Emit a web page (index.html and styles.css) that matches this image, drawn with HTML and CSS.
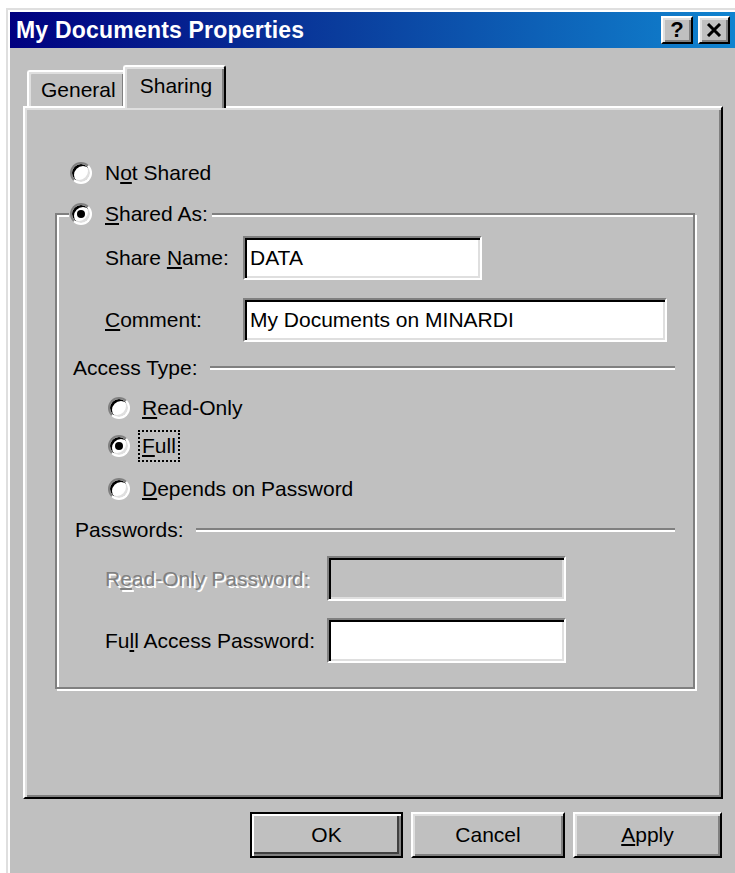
FILE: index.html
```html
<!DOCTYPE html>
<html lang="en">
<head>
<meta charset="utf-8">
<title>My Documents Properties</title>
<link rel="stylesheet" href="styles.css">
</head>
<body>
<div class="window">
  <div class="titlebar">
    <span class="title">My Documents Properties</span>
    <div class="tb-buttons">
      <button class="tb-btn help">?</button>
      <button class="tb-btn close" aria-label="Close">
        <svg width="16" height="14" viewBox="0 0 16 14"><path d="M2 1 L14 13 M14 1 L2 13" stroke="#000" stroke-width="3" fill="none"/></svg>
      </button>
    </div>
  </div>

  <div class="dialog-body">
    <div class="tabs">
      <div class="tab">General</div>
      <div class="tab active">Sharing</div>
    </div>

    <div class="panel">
      <label class="option not-shared">
        <span class="radio"></span>
        <span>N<u>o</u>t Shared</span>
      </label>

      <fieldset class="group">
        <legend class="legend">
          <span class="radio checked"></span>
          <span><u>S</u>hared As:</span>
        </legend>

        <div class="field-row share-row">
          <span class="label w-short">Share <u>N</u>ame:</span>
          <div class="textbox share-name">DATA</div>
        </div>
        <div class="field-row comment-row">
          <span class="label w-short"><u>C</u>omment:</span>
          <div class="textbox comment">My Documents on MINARDI</div>
        </div>

        <div class="heading access-heading">
          <span class="heading-label">Access Type:</span>
          <span class="etch"></span>
        </div>

        <label class="option sub read-only">
          <span class="radio"></span>
          <span><u>R</u>ead-Only</span>
        </label>
        <label class="option sub full">
          <span class="radio checked"></span>
          <span class="focus"><u>F</u>ull</span>
        </label>
        <label class="option sub depends">
          <span class="radio"></span>
          <span><u>D</u>epends on Password</span>
        </label>

        <div class="heading pw-heading">
          <span class="heading-label">Passwords:</span>
          <span class="etch"></span>
        </div>

        <div class="field-row ro-row">
          <span class="label w-long disabled">R<u>e</u>ad-Only Password:</span>
          <div class="textbox pw disabled-box"></div>
        </div>
        <div class="field-row fa-row">
          <span class="label w-long">Fu<u>l</u>l Access Password:</span>
          <div class="textbox pw"></div>
        </div>
      </fieldset>
    </div>

    <div class="actions">
      <button class="btn default ok">OK</button>
      <button class="btn cancel">Cancel</button>
      <button class="btn apply"><u>A</u>pply</button>
    </div>
  </div>
</div>
</body>
</html>
```

FILE: styles.css
```css
* { box-sizing: border-box; }

html, body {
  margin: 0;
  background: #fff;
}

body {
  font-family: "Liberation Sans", Arial, sans-serif;
  font-size: 21px;
  color: #000;
  overflow: hidden;
}

u { text-decoration-thickness: 2px; text-underline-offset: 2px; }

/* window frame */
.window {
  margin: 8px 0 0 6px;
  height: 865px;
  background: #c0c0c0;
  border-top: 2px solid #dfdfdf;
  border-left: 2px solid #dfdfdf;
  box-shadow: inset 2px 2px #fff;
  padding: 2px 0 0 2px;
  overflow: hidden;
}

.titlebar {
  height: 36px;
  background: linear-gradient(90deg, #000080 0%, #0a3c9c 45%, #1084d0 100%);
  display: flex;
  align-items: center;
  justify-content: space-between;
  padding: 0 5px 0 6px;
}

.title {
  color: #fff;
  font-weight: bold;
  font-size: 23px;
  letter-spacing: 0.2px;
}

.tb-buttons { display: flex; gap: 5px; }

.tb-btn {
  width: 32px;
  height: 28px;
  background: #c0c0c0;
  border: 2px solid;
  border-color: #fff #000 #000 #fff;
  box-shadow: inset 2px 2px #dfdfdf, inset -2px -2px #808080;
  display: flex;
  align-items: center;
  justify-content: center;
  padding: 0;
  font-family: "Liberation Sans", Arial, sans-serif;
  font-weight: bold;
  font-size: 22px;
  color: #000;
  line-height: 1;
}

/* dialog contents */
.dialog-body { padding: 17px 0 0 13px; }

.tabs {
  display: flex;
  align-items: flex-end;
  padding-left: 4px;
  margin-bottom: -2px;
  position: relative;
  z-index: 1;
}

.tab {
  height: 36px;
  margin-bottom: 2px;
  padding: 2px 8px 0 12px;
  display: flex;
  align-items: center;
  background: #c0c0c0;
  border-top: 2px solid #fff;
  border-left: 2px solid #fff;
  border-right: 2px solid #000;
  border-radius: 3px 3px 0 0;
  box-shadow: inset 2px 2px #dfdfdf, inset -2px 0 #808080;
}

.tab.active {
  height: 43px;
  margin-bottom: 0;
  margin-left: -3px;
  padding: 0 12px 4px 15px;
}

.panel {
  width: 700px;
  height: 693px;
  border: 2px solid;
  border-color: #fff #000 #000 #fff;
  box-shadow: inset 2px 2px #dfdfdf, inset -2px -2px #808080;
  padding-top: 52px;
}

/* radio buttons */
.option {
  display: flex;
  align-items: center;
  height: 26px;
  gap: 13px;
}

.radio {
  flex: none;
  width: 22px;
  height: 22px;
  border-radius: 50%;
  background: #fff;
  border: 2px solid;
  border-color: #808080 #fff #fff #808080;
  box-shadow: inset 2px 2px #000, inset -2px -2px #dfdfdf;
  display: flex;
  align-items: center;
  justify-content: center;
}

.radio.checked::after {
  content: "";
  width: 8px;
  height: 8px;
  border-radius: 50%;
  background: #000;
}

.not-shared { margin-left: 45px; }

/* etched group box */
.group {
  margin: 15px 26px 0 30px;
  padding: 0 0 24px 0;
  border: 2px solid #808080;
  box-shadow: inset 2px 2px #fff, 2px 2px #fff;
  min-width: 0;
}

.legend {
  display: flex;
  align-items: center;
  gap: 13px;
  height: 26px;
  margin-left: 12px;
  padding: 0 4px 0 1px;
  background: #c0c0c0;
}

.field-row { display: flex; align-items: center; }
.label { flex: none; margin-left: 48px; }
.w-short { width: 138px; }
.w-long { width: 222px; }

.share-row { margin-top: 9px; }
.comment-row { margin-top: 18px; }

.textbox {
  height: 44px;
  background: #fff;
  border: 2px solid;
  border-color: #808080 #fff #fff #808080;
  box-shadow: inset 2px 2px #000, inset -2px -2px #dfdfdf;
  padding: 0 5px;
  display: flex;
  align-items: center;
  white-space: nowrap;
}

.share-name { width: 239px; }
.comment { width: 424px; }
.pw { width: 239px; height: 45px; }
.disabled-box { background: #c0c0c0; }

.disabled {
  color: #808080;
  text-shadow: 2px 2px 0 #fff;
}

.heading {
  display: flex;
  align-items: center;
  height: 26px;
  margin-right: 18px;
}

.heading-label { margin-right: 12px; }
.access-heading { margin-top: 13px; margin-left: 16px; }
.pw-heading { margin-top: 15px; margin-left: 18px; }

.etch {
  flex: 1;
  height: 4px;
  border-top: 2px solid #808080;
  border-bottom: 2px solid #fff;
}

.sub { margin-left: 51px; gap: 12px; }
.read-only { margin-top: 14px; }
.full { margin-top: 12px; }
.depends { margin-top: 17px; }

.focus {
  outline: 2px dotted #000;
  outline-offset: 2px;
}

.ro-row { margin-top: 13px; }
.fa-row { margin-top: 17px; }

/* command buttons */
.actions {
  display: flex;
  justify-content: flex-end;
  gap: 8px;
  width: 700px;
  padding-right: 1px;
  margin-top: 13px;
}

.btn {
  height: 46px;
  background: #c0c0c0;
  border: 2px solid;
  border-color: #fff #000 #000 #fff;
  box-shadow: inset 2px 2px #dfdfdf, inset -2px -2px #808080;
  font-family: "Liberation Sans", Arial, sans-serif;
  font-size: 21px;
  color: #000;
  padding: 0;
}

.btn.default {
  border-color: #000;
  box-shadow: inset 2px 2px #fff, inset -2px -2px #808080, inset -4px -4px #404040;
}

.ok { width: 153px; }
.cancel { width: 154px; }
.apply { width: 149px; }
```
